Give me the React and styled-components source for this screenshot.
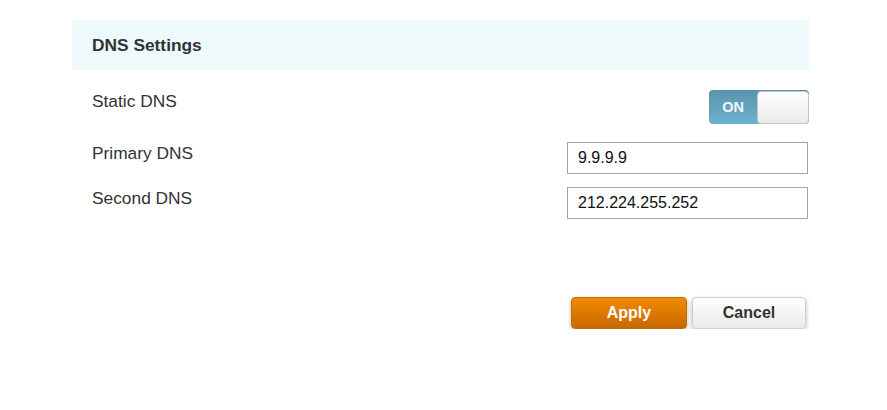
import React from "react";
import styled, { createGlobalStyle } from "styled-components";

const Global = createGlobalStyle`
  html, body { margin: 0; padding: 0; background: #fff; }
  body { font-family: Arial, "Liberation Sans", sans-serif; color: #333; }
`;

const Page = styled.div`
  padding: 20px 0 0 72px;
  width: 737px;
`;

const Header = styled.div`
  height: 50px;
  background: #edf9fa;
  display: flex;
  align-items: center;
  padding-left: 20px;
  font-size: 13pt;
  font-weight: bold;
  color: #333;
`;

const Row = styled.div`
  display: flex;
  justify-content: space-between;
  align-items: flex-start;
  padding-left: 20px;
  margin-top: ${(p) => p.$mt}px;
`;

const Label = styled.div`
  font-size: 13pt;
  line-height: 20px;
  padding-top: ${(p) => p.$pt || 0}px;
  color: #333;
`;

const Toggle = styled.div`
  display: flex;
  width: 100px;
  height: 34px;
  border-radius: 4px;
  background: linear-gradient(#5893ae, #6db3cd);
  box-sizing: border-box;
`;

const ToggleText = styled.div`
  width: 48px;
  display: flex;
  align-items: center;
  justify-content: center;
  color: #fff;
  font-weight: bold;
  font-size: 14.5px;
  opacity: 0.92;
`;

const Knob = styled.div`
  flex: 1;
  margin: 1px 0 0 0;
  height: 33px;
  box-sizing: border-box;
  border: 1px solid #c4c4c4;
  border-radius: 4px;
  background: linear-gradient(#ffffff, #ebebeb);
`;

const Input = styled.input`
  width: 241px;
  height: 32px;
  box-sizing: border-box;
  border: 1px solid #a3a3a3;
  padding: 0 10px;
  font-family: Arial, "Liberation Sans", sans-serif;
  font-size: 16px;
  color: #111;
  outline: none;
  margin-right: 1px;
`;

const Actions = styled.div`
  display: flex;
  justify-content: flex-end;
  gap: 5px;
  margin-top: 78px;
  padding-right: 3px;
`;

const Button = styled.button`
  width: ${(p) => (p.$primary ? 116 : 114)}px;
  height: 32px;
  border-radius: 4px;
  font-family: Arial, "Liberation Sans", sans-serif;
  font-size: 16px;
  font-weight: bold;
  cursor: pointer;
  color: ${(p) => (p.$primary ? "#fff" : "#333")};
  border: 1px solid ${(p) => (p.$primary ? "#c46a00" : "#cfcfcf")};
  background: ${(p) =>
    p.$primary
      ? "linear-gradient(#f28a00, #c86800)"
      : "linear-gradient(#ffffff, #e9e9e9)"};
  box-shadow: 0 2px 4px rgba(0, 0, 0, 0.28);
`;

export default function App() {
  return (
    <>
      <Global />
      <Page>
        <Header>DNS Settings</Header>
        <Row $mt={20}>
          <Label $pt={1}>Static DNS</Label>
          <Toggle>
            <ToggleText>ON</ToggleText>
            <Knob />
          </Toggle>
        </Row>
        <Row $mt={18}>
          <Label $pt={1}>Primary DNS</Label>
          <Input defaultValue="9.9.9.9" />
        </Row>
        <Row $mt={13}>
          <Label $pt={1}>Second DNS</Label>
          <Input defaultValue="212.224.255.252" />
        </Row>
        <Actions>
          <Button $primary>Apply</Button>
          <Button>Cancel</Button>
        </Actions>
      </Page>
    </>
  );
}
